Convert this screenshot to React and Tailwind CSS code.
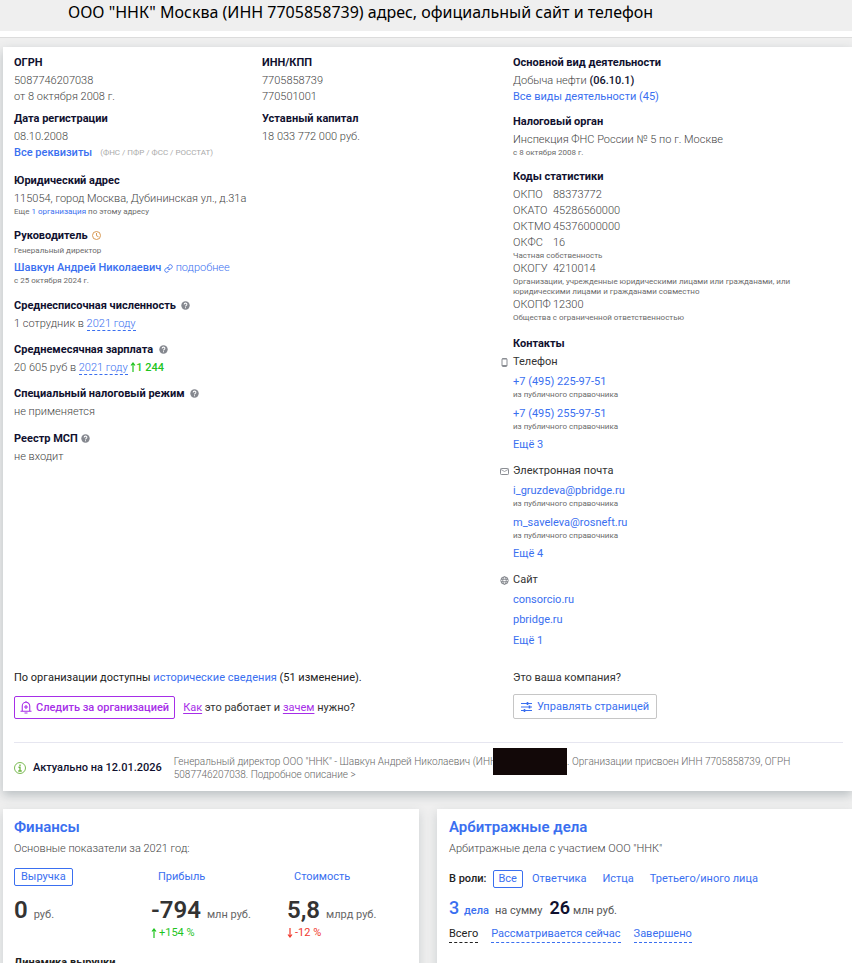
import clsx from "clsx";

const statCodes = [
  { name: "ОКПО", code: "88373772" },
  { name: "ОКАТО", code: "45286560000" },
  { name: "ОКТМО", code: "45376000000" },
  { name: "ОКФС", code: "16", note: "Частная собственность" },
  {
    name: "ОКОГУ",
    code: "4210014",
    note: "Организации, учрежденные юридическими лицами или гражданами, или юридическими лицами и гражданами совместно",
  },
  { name: "ОКОПФ", code: "12300", note: "Общества с ограниченной ответственностью" },
];

const source = "из публичного справочника";

const finance = [
  { tab: "Выручка", value: "0", unit: "руб." },
  { tab: "Прибыль", value: "-794", unit: "млн руб.", delta: "+154 %", up: true },
  { tab: "Стоимость", value: "5,8", unit: "млрд руб.", delta: "-12 %", up: false },
];

const roles = ["Все", "Ответчика", "Истца", "Третьего/иного лица"];

function Title({ children, className }) {
  return (
    <h2 className={clsx("text-[11px] leading-5 font-bold text-[#10112f]", className)}>
      {children}
    </h2>
  );
}

function Note({ children, className }) {
  return (
    <p className={clsx("text-[8px] leading-[10px] font-normal text-[#6b6b6b]", className)}>
      {children}
    </p>
  );
}

function Link({ children, className }) {
  return (
    <a href="#" className={clsx("text-[#3a6ff0]", className)}>
      {children}
    </a>
  );
}

function HelpIcon() {
  return (
    <svg viewBox="0 0 16 16" className="inline-block w-[9px] h-[9px] mb-0.5" aria-hidden="true">
      <circle cx="8" cy="8" r="7.5" fill="#85888f" />
      <path
        d="M5.6 6.2C5.6 3 10.4 3 10.4 6.1 10.4 7.8 8 7.9 8 9.8M8 11.2v1.8"
        fill="none"
        stroke="#fff"
        strokeWidth="1.8"
      />
    </svg>
  );
}

function ClockIcon() {
  return (
    <svg viewBox="0 0 18 18" className="ml-0.5 inline-block w-[9px] h-[9px] mb-0.5" aria-hidden="true">
      <g fill="none" stroke="#d99a55" strokeWidth="2">
        <circle cx="9" cy="9" r="8" />
        <path d="M9 4v5.5l4 2" />
      </g>
    </svg>
  );
}

function ChainIcon() {
  return (
    <svg viewBox="0 0 24 24" className="inline-block w-[9px] h-[9px]" aria-hidden="true">
      <g fill="none" stroke="#3a6ff0" strokeWidth="2.4" strokeLinecap="round">
        <path d="M10 13a5 5 0 0 0 7.5.5l3.5-3.5a5 5 0 0 0-7-7l-2 2" />
        <path d="M14 11a5 5 0 0 0-7.5-.5L3 14a5 5 0 0 0 7 7l2-2" />
      </g>
    </svg>
  );
}

function PhoneIcon() {
  return (
    <svg viewBox="0 0 9 9" className="w-[9px] h-[9px]" aria-hidden="true">
      <rect x="2" y="0.5" width="5" height="8" rx="1" fill="none" stroke="#8a8d93" />
      <path d="M2 1h5M2 7.5h5" stroke="#8a8d93" />
    </svg>
  );
}

function MailIcon() {
  return (
    <svg viewBox="0 0 9 9" className="w-[9px] h-[9px]" aria-hidden="true">
      <rect x="0.5" y="1.5" width="8" height="6" rx="0.8" fill="none" stroke="#8a8d93" />
      <path d="M1 2.5l3.5 2L8 2.5" fill="none" stroke="#8a8d93" strokeWidth="0.8" />
    </svg>
  );
}

function GlobeIcon() {
  return (
    <svg viewBox="0 0 18 18" className="w-[9px] h-[9px]" aria-hidden="true">
      <g fill="none" stroke="#7d8087" strokeWidth="1.8">
        <circle cx="9" cy="9" r="7.5" />
        <ellipse cx="9" cy="9" rx="3.5" ry="7.5" />
        <path d="M2 6.5h14M2 11.5h14" />
      </g>
    </svg>
  );
}

function BellIcon() {
  return (
    <svg viewBox="0 0 24 26" className="w-3 h-[13px]" aria-hidden="true">
      <g fill="none" stroke="#a62ee8" strokeWidth="2.2">
        <path d="M4.5 20V10a7.5 7.5 0 0 1 15 0v10M1 20.5h22M12 0v3M9 24h6" />
        <path d="M12 8v8M8 12h8" />
      </g>
    </svg>
  );
}

function SlidersIcon() {
  return (
    <svg viewBox="0 0 11 10" className="w-[11px] h-[10px]" aria-hidden="true">
      <path d="M0 1.5h11M0 5h11M0 8.5h11" stroke="#3a6ff0" strokeWidth="1.2" />
      <path d="M6.5 0v3M8.5 3.5v3M3.5 7v3" stroke="#3a6ff0" strokeWidth="1.6" />
    </svg>
  );
}

function InfoIcon() {
  return (
    <svg viewBox="0 0 24 24" className="w-3 h-3 shrink-0" aria-hidden="true">
      <g fill="none" stroke="#6cb33f">
        <circle cx="12" cy="12" r="11" strokeWidth="1.8" />
        <path d="M12 5v3M9 10.5h3V18M8.5 18h7" strokeWidth="2.6" />
      </g>
    </svg>
  );
}

function ArrowIcon({ up, className }) {
  return (
    <svg
      viewBox="0 0 6 10"
      className={clsx("inline-block w-1.5 h-2.5", !up && "rotate-180", className)}
      aria-hidden="true"
    >
      <path d="M3 10V1M1 3.5L3 1l2 2.5" fill="none" stroke="currentColor" strokeWidth="1.2" />
    </svg>
  );
}

function ContactGroup({ icon, label, items, more, noted, className }) {
  return (
    <div className={clsx("font-normal", className)}>
      <h3 className="flex items-center gap-1 -ml-[13px] leading-4 text-[#333]">
        {icon}
        {label}
      </h3>
      <ul className={clsx("mt-1 flex flex-col", noted ? "gap-1.5" : "gap-1")}>
        {items.map((item) => (
          <li key={item}>
            <Link>{item}</Link>
            {noted && <Note>{source}</Note>}
          </li>
        ))}
      </ul>
      <Link className="mt-[5px] block">{more}</Link>
    </div>
  );
}

function CompanyCard() {
  return (
    <section className="ml-[3px] bg-white pt-1.5 pl-[11px] pr-[9px] pb-2.5 shadow-[0_4px_10px_rgba(60,80,90,0.3)]">
      <div className="grid grid-cols-[248fr_251fr_330fr] font-light text-[#444]">
        <div>
          <Title>ОГРН</Title>
          <p>5087746207038</p>
          <p>от 8 октября 2008 г.</p>
          <Title className="mt-1">Дата регистрации</Title>
          <p>08.10.2008</p>
          <p className="flex items-center gap-2">
            <Link className="font-medium">Все реквизиты</Link>
            <span className="text-[8px] font-normal text-[#aaa]">(ФНС / ПФР / ФСС / РОССТАТ)</span>
          </p>

          <Title className="mt-2.5">Юридический адрес</Title>
          <p>115054, город Москва, Дубининская ул., д.31а</p>
          <Note>
            Еще <Link>1 организация</Link> по этому адресу
          </Note>

          <Title className="mt-[9px]">
            Руководитель <ClockIcon />
          </Title>
          <Note>Генеральный директор</Note>
          <p className="mt-1 whitespace-nowrap">
            <Link className="font-medium">Шавкун Андрей Николаевич</Link>{" "}
            <Link>
              <ChainIcon /> подробнее
            </Link>
          </p>
          <Note>с 25 октября 2024 г.</Note>

          <Title className="mt-2.5">
            Среднесписочная численность&nbsp; <HelpIcon />
          </Title>
          <p>
            1 сотрудник в <Link className="border-b border-dashed border-[#3a6ff0]">2021 году</Link>
          </p>

          <Title className="mt-2">
            Среднемесячная зарплата&nbsp; <HelpIcon />
          </Title>
          <p>
            20 605 руб в <Link className="border-b border-dashed border-[#3a6ff0]">2021 году</Link>{" "}
            <span className="font-medium text-[#1fc41f]">
              <ArrowIcon up className="mb-0.5" />1 244
            </span>
          </p>

          <Title className="mt-2">
            Специальный налоговый режим&nbsp; <HelpIcon />
          </Title>
          <p>не применяется</p>

          <Title className="mt-[9px]">
            Реестр МСП <HelpIcon />
          </Title>
          <p>не входит</p>
        </div>

        <div>
          <Title>ИНН/КПП</Title>
          <p>7705858739</p>
          <p>770501001</p>
          <Title className="mt-1">Уставный капитал</Title>
          <p>18 033 772 000 руб.</p>
        </div>

        <div>
          <Title>Основной вид деятельности</Title>
          <p>
            Добыча нефти <span className="font-medium text-[#10112f]">(06.10.1)</span>
          </p>
          <Link className="block font-normal">Все виды деятельности (45)</Link>

          <Title className="mt-[7px]">Налоговый орган</Title>
          <p>Инспекция ФНС России № 5 по г. Москве</p>
          <Note>с 8 октября 2008 г.</Note>

          <Title className="mt-[9px]">Коды статистики</Title>
          <dl>
            {statCodes.map(({ name, code, note }) => (
              <div key={name}>
                <div className="flex">
                  <dt className="w-10">{name}</dt>
                  <dd>{code}</dd>
                </div>
                {note && (
                  <dd className="max-w-[300px] text-[8px] leading-[10px] font-normal text-[#6b6b6b]">
                    {note}
                  </dd>
                )}
              </div>
            ))}
          </dl>

          <Title className="mt-[11px]">Контакты</Title>
          <ContactGroup
            icon={<PhoneIcon />}
            label="Телефон"
            items={["+7 (495) 225-97-51", "+7 (495) 255-97-51"]}
            more="Ещё 3"
            noted
          />
          <ContactGroup
            className="mt-2.5"
            icon={<MailIcon />}
            label="Электронная почта"
            items={["i_gruzdeva@pbridge.ru", "m_saveleva@rosneft.ru"]}
            more="Ещё 4"
            noted
          />
          <ContactGroup
            className="mt-2.5"
            icon={<GlobeIcon />}
            label="Сайт"
            items={["consorcio.ru", "pbridge.ru"]}
            more="Ещё 1"
          />
        </div>
      </div>

      <div className="mt-[21px] grid grid-cols-[499fr_330fr] text-[#222]">
        <div>
          <p>
            По организации доступны <Link>исторические сведения</Link> (51 изменение).
          </p>
          <div className="mt-2.5 flex items-center gap-2">
            <button className="flex h-[23px] items-center gap-1 rounded-xs border border-[#a62ee8] px-[5px] font-medium text-[#a62ee8]">
              <BellIcon />
              Следить за организацией
            </button>
            <p className="text-[#333]">
              <a href="#" className="text-[#a62ee8] underline underline-offset-2">Как</a> это
              работает и{" "}
              <a href="#" className="text-[#a62ee8] underline underline-offset-2">зачем</a> нужно?
            </p>
          </div>
        </div>
        <div>
          <p className="text-[#333]">Это ваша компания?</p>
          <button className="mt-2 flex h-[25px] items-center gap-[5px] rounded-xs border border-[#c6c6c6] px-[7px] text-[#3a6ff0]">
            <SlidersIcon />
            Управлять страницей
          </button>
        </div>
      </div>

      <footer className="mt-[23px] flex items-center gap-3 border-t border-[#e6e6f0] pt-3">
        <p className="flex items-center gap-[7px] whitespace-nowrap font-medium text-[#10112f]">
          <InfoIcon />
          Актуально на 12.01.2026
        </p>
        <p className="max-w-[630px] text-[10px] leading-[13px] font-light text-[#666]">
          Генеральный директор ООО "ННК" - Шавкун Андрей Николаевич (ИНН
          <span className="relative inline-block w-[70px]">
            <span className="absolute -left-1 -top-[17px] h-[27px] w-[74px] bg-[#120808]" />
          </span>
          . Организации присвоен ИНН 7705858739, ОГРН 5087746207038. Подробное описание &gt;
        </p>
      </footer>
    </section>
  );
}

function FinanceCard() {
  return (
    <section className="bg-white px-[11px] pt-2 text-[#666] shadow-[0_4px_10px_rgba(60,80,90,0.2)]">
      <h2 className="text-[15px] leading-5 font-semibold">
        <Link>Финансы</Link>
      </h2>
      <p className="mt-1 font-light text-[#444]">Основные показатели за 2021 год:</p>
      <div className="mt-[11px] grid grid-cols-[137fr_136fr_121fr]">
        {finance.map(({ tab, value, unit, delta, up }, i) => (
          <div key={tab}>
            <button
              className={clsx(
                "h-[18px] rounded-xs border px-1.5 text-[#3a6ff0]",
                i === 0 ? "border-[#3a6ff0]" : "border-transparent"
              )}
            >
              {tab}
            </button>
            <p className="mt-2.5">
              <span className="mr-1.5 text-[24px] leading-7 font-semibold text-[#333]">{value}</span>
              {unit}
            </p>
            {delta && (
              <p className={clsx("mt-px", up ? "text-[#1fc41f]" : "text-[#f03a2e]")}>
                <ArrowIcon up={up} className="mr-0.5" />
                {delta}
              </p>
            )}
          </div>
        ))}
      </div>
      <h3 className="mt-3 leading-5 font-bold text-[#222]">Динамика выручки</h3>
    </section>
  );
}

function CasesCard() {
  return (
    <section className="bg-white px-3 pt-2 text-[#555] shadow-[0_4px_10px_rgba(60,80,90,0.2)]">
      <h2 className="text-[15px] leading-5 font-semibold">
        <Link>Арбитражные дела</Link>
      </h2>
      <p className="mt-1 font-light text-[#444]">Арбитражные дела с участием ООО "ННК"</p>
      <div className="mt-[13px] flex items-center">
        <span className="mr-1.5 font-medium text-[#222]">В роли:</span>
        {roles.map((role, i) => (
          <button
            key={role}
            className={clsx(
              "mr-0.5 h-[18px] rounded-xs border text-[#3a6ff0]",
              i === 0 ? "border-[#3a6ff0] px-[5px]" : "border-transparent px-1.5"
            )}
          >
            {role}
          </button>
        ))}
      </div>
      <p className="mt-2 leading-6">
        <Link className="font-medium">
          <span className="mr-0.5 text-[18px]">3</span> дела
        </Link>
        <span className="ml-1.5 mr-[7px]">на сумму</span>
        <span className="mr-[3px] text-[18px] font-semibold text-[#10112f]">26</span>
        млн руб.
      </p>
      <p className="mt-[3px] flex gap-[13px]">
        <a href="#" className="border-b border-dashed border-[#222] text-[#222]">Всего</a>
        <Link className="border-b border-dashed border-[#3a6ff0]">Рассматривается сейчас</Link>
        <Link className="border-b border-dashed border-[#3a6ff0]">Завершено</Link>
      </p>
      <h3 className="mt-[15px] leading-5 font-bold text-[#222]">Исход</h3>
    </section>
  );
}

export default function App() {
  return (
    <div className="min-h-screen bg-[#efefef] font-['Roboto','Liberation_Sans',sans-serif] text-[11px] leading-4">
      <header className="border-b border-[#dcdcdc] bg-white pb-1.5">
        <h1 className="h-[31px] bg-[#efefef] pl-[68px] font-['Noto_Sans',sans-serif] text-[16px] leading-6 text-black">
          ООО "ННК" Москва (ИНН 7705858739) адрес, официальный сайт и телефон
        </h1>
      </header>
      <main className="pt-[9px]">
        <CompanyCard />
        <div className="mt-[18px] ml-[3px] grid grid-cols-[416fr_415fr] gap-[18px]">
          <FinanceCard />
          <CasesCard />
        </div>
      </main>
    </div>
  );
}
